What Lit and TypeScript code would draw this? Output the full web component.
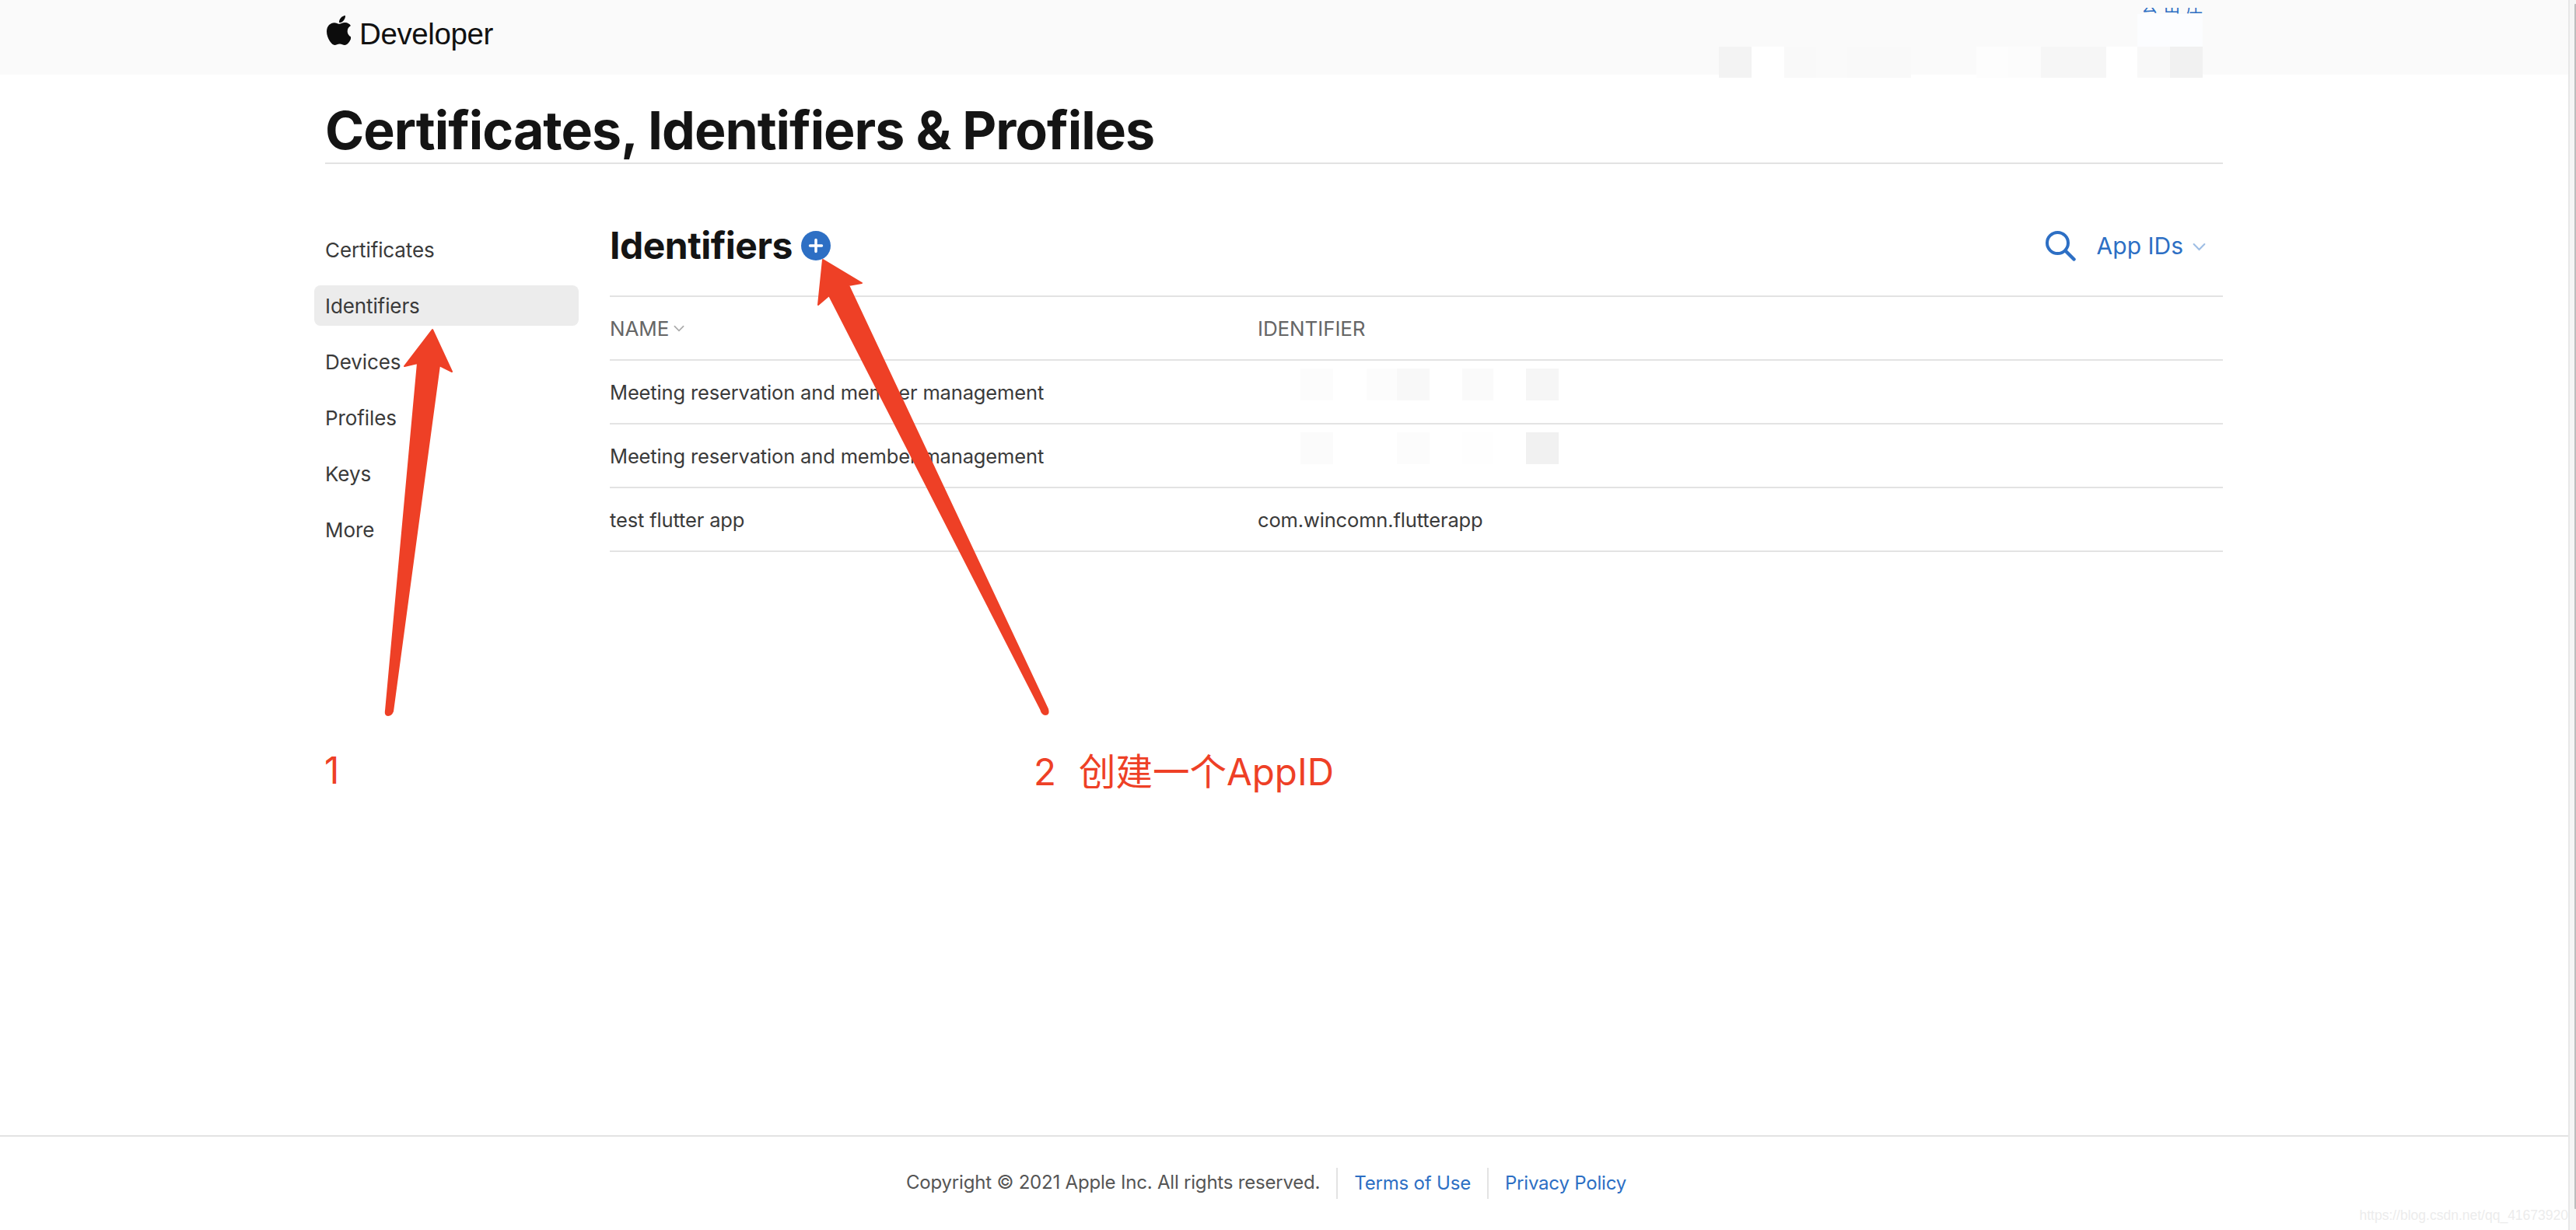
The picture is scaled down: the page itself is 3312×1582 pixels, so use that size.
import { LitElement, css, html, svg } from "lit";
import { customElement } from "lit/decorators.js";

const navItems = ["Certificates", "Identifiers", "Devices", "Profiles", "Keys", "More"];

// [gap before, width, colour] of the blurred-out patches
type Patch = [number, number, string];

const rows: { name: string; id?: string; patches?: Patch[] }[] = [
  {
    name: "Meeting reservation and member management",
    patches: [
      [55, 42, "#fcfcfc"],
      [43, 39, "#fcfcfc"],
      [0, 42, "#f8f8f8"],
      [42, 40, "#fafafa"],
      [42, 42, "#f6f6f6"],
    ],
  },
  {
    name: "Meeting reservation and member management",
    patches: [
      [55, 42, "#fbfbfb"],
      [82, 42, "#fcfcfc"],
      [42, 40, "#fefefe"],
      [42, 42, "#f1f1f1"],
    ],
  },
  { name: "test flutter app", id: "com.wincomn.flutterapp" },
];

const headerPatches: Patch[] = [
  [0, 42, "#f3f3f3"],
  [0, 42, "#ffffff"],
  [0, 41, "#f9f9f9"],
  [0, 40, "#fafafa"],
  [0, 82, "#f9f9f9"],
  [84, 41, "#fdfdfd"],
  [0, 42, "#fcfcfc"],
  [0, 84, "#f6f6f6"],
  [0, 40, "#ffffff"],
  [0, 42, "#f8f8f8"],
  [0, 42, "#f1f1f1"],
];

const chevron = svg`<path d="M1 1.5 6 6.500l5-5" fill="none" stroke="currentColor" stroke-width="1.500" stroke-linecap="round" />`;

@customElement("app-root")
export class AppRoot extends LitElement {
  static styles = css`
    :host {
      display: block;
      position: relative;
      width: 3312px;
      height: 1582px;
      overflow: hidden;
      background: #fff;
      color: #111;
      font-family: Inter, "Liberation Sans", sans-serif;
    }

    .page {
      display: flex;
      flex-direction: column;
      height: 100%;
      margin-right: 10px;
    }

    header {
      flex: none;
      height: 96px;
      background: #fafafa;
      padding-left: 420px;
      display: flex;
      align-items: center;
      position: relative;
    }

    .logo {
      width: 31px;
      height: 38px;
      margin: -18px 11px 0 0;
      fill: #0c0c0c;
    }

    .wordmark {
      font-family: "Liberation Sans", sans-serif;
      font-size: 38.5px;
      letter-spacing: -0.4px;
      color: #111;
      margin-top: -8px;
    }

    .account {
      position: absolute;
      left: 2753px;
      top: 10px;
      height: 8px;
      overflow: hidden;
      font-family: "Noto Sans CJK SC", sans-serif;
      font-size: 21px;
      line-height: 26px;
      letter-spacing: 8px;
      color: #2d6fc4;
      white-space: nowrap;
    }

    .account span {
      display: block;
      margin-top: -17px;
    }

    .smear {
      position: absolute;
      left: 2210px;
      top: 60px;
      height: 40px;
      display: flex;
    }

    .wash {
      position: absolute;
      left: 2748px;
      top: 18px;
      width: 84px;
      height: 42px;
      background: #fcfdff;
    }

    main {
      flex: 1;
      width: 2440px;
      margin-left: 418px;
      display: flex;
      flex-direction: column;
    }

    h1 {
      margin: 0;
      height: 92px;
      padding-top: 21px;
      border-bottom: 2px solid #e2e2e2;
      font-size: 68px;
      font-weight: 700;
      line-height: 100px;
      letter-spacing: -1px;
      white-space: nowrap;
      color: #141414;
    }

    .columns {
      display: flex;
      flex: 1;
    }

    nav {
      width: 380px;
      flex: none;
      margin-left: -14px;
      padding-top: 84px;
      display: flex;
      flex-direction: column;
      gap: 20px;
    }

    nav a {
      width: 340px;
      height: 52px;
      padding-left: 14px;
      box-sizing: border-box;
      display: flex;
      align-items: center;
      border-radius: 8px;
      font-size: 26px;
      letter-spacing: -0.1px;
      color: #3a3a3a;
    }

    nav a.active {
      background: #ececec;
    }

    .content {
      flex: 1;
      min-width: 0;
    }

    .bar {
      height: 129px;
      padding-top: 40px;
      display: flex;
      align-items: center;
      justify-content: space-between;
      border-bottom: 2px solid #e3e3e3;
    }

    .bar-title {
      display: flex;
      align-items: center;
      gap: 11px;
    }

    h2 {
      margin: 0;
      font-size: 48px;
      font-weight: 700;
      letter-spacing: -0.5px;
      color: #141414;
    }

    .plus {
      width: 38px;
      height: 38px;
      display: block;
    }

    .tools {
      display: flex;
      align-items: center;
      color: #2d6fc4;
      font-size: 30px;
      margin-right: 22px;
    }

    .search {
      width: 39px;
      height: 39px;
      margin: 2px 27px 0 0;
    }

    .tools .chev {
      width: 17px;
      height: 11px;
      margin: 3px 0 0 12px;
      color: #9dbde4;
    }

    .row {
      height: 80px;
      display: grid;
      grid-template-columns: 833px 1fr;
      align-items: center;
      border-bottom: 2px solid #e3e3e3;
      font-size: 25.5px;
      letter-spacing: -0.15px;
      color: #3a3a3a;
    }

    .row.head {
      color: #666;
      font-size: 26px;
      letter-spacing: -0.1px;
    }

    .row.head .cell {
      display: flex;
      align-items: center;
    }

    .row.head .chev {
      width: 14px;
      height: 9px;
      margin-left: 6px;
      color: #aaa;
    }

    .patches {
      display: flex;
      height: 41px;
      margin-top: -19px;
    }

    .patch {
      height: 100%;
      flex: none;
    }

    footer {
      flex: none;
      height: 122px;
      border-top: 2px solid #e3e3e3;
      box-sizing: border-box;
      display: flex;
      align-items: center;
      justify-content: center;
      font-size: 24px;
      letter-spacing: -0.2px;
      color: #555;
      padding-right: 46px;
    }

    footer span {
      margin-top: -3px;
    }

    footer a {
      color: #2d6fc4;
      padding-left: 21px;
      margin-left: 21px;
      border-left: 2px solid #e3e3e3;
      line-height: 40px;
    }

    .scrollbar {
      position: absolute;
      top: 0;
      right: 0;
      bottom: 0;
      width: 10px;
      background: #f5f5f5;
      border-left: 2px solid #e8e8e8;
      box-sizing: border-box;
    }

    .thumb {
      position: absolute;
      top: 5px;
      right: 0;
      width: 2px;
      height: 1550px;
      border-radius: 1px 0 0 1px;
      background: #bdbdbd;
    }

    .marks {
      position: absolute;
      left: 0;
      top: 0;
      width: 3312px;
      height: 1582px;
      pointer-events: none;
    }

    .note {
      position: absolute;
      color: #ee4026;
      font-size: 47.5px;
      line-height: 56px;
      white-space: nowrap;
      font-family: Inter, "Noto Sans CJK SC", sans-serif;
    }

    .note.one {
      left: 417px;
      top: 963px;
    }

    .note.two {
      left: 1329px;
      top: 965px;
    }

    .note .num {
      margin-right: 29px;
    }

    .watermark {
      position: absolute;
      right: 10px;
      top: 1552px;
      font-family: "Liberation Sans", sans-serif;
      font-size: 17.500px;
      line-height: 22px;
      color: #ececec;
      white-space: nowrap;
    }
  `;

  renderPatches(patches: Patch[]) {
    return patches.map(
      ([gap, width, color]) =>
        html`<div class="patch" style="margin-left:${gap}px;width:${width}px;background:${color}"></div>`
    );
  }

  render() {
    return html`
      <div class="page">
        <header>
          <svg class="logo" viewBox="4 32 365 448">
            <path d="M318.7 268.7c-.2-36.7 16.4-64.4 50-84.8-18.8-26.9-47.2-41.7-84.7-44.6-35.5-2.8-74.3 20.7-88.5 20.7-15 0-49.4-19.7-76.4-19.7C63.3 141.2 4 184.8 4 273.5q0 39.3 14.4 81.2c12.8 36.7 59 126.7 107.2 125.2 25.2-.6 43-17.9 75.8-17.900 31.8 0 48.3 17.900 76.400 17.900 48.600-.7 90.400-82.500 102.600-119.300-65.200-30.700-61.700-90-61.700-91.900zm-56.600-164.200c27.300-32.400 24.800-61.900 24-72.500-24.100 1.400-52 16.400-67.900 34.900-17.500 19.800-27.800 44.300-25.600 71.900 26.100 2 49.900-11.400 69.500-34.300z" />
          </svg>
          <span class="wordmark">Developer</span>
          <div class="account"><span>公出庄</span></div>
          <div class="wash"></div>
          <div class="smear">${this.renderPatches(headerPatches)}</div>
        </header>
        <main>
          <h1>Certificates, Identifiers &amp; Profiles</h1>
          <div class="columns">
            <nav>
              ${navItems.map((item) => html`<a class=${item === "Identifiers" ? "active" : ""}>${item}</a>`)}
            </nav>
            <div class="content">
              <div class="bar">
                <div class="bar-title">
                  <h2>Identifiers</h2>
                  <svg class="plus" viewBox="0 0 38 38">
                    <circle cx="19" cy="19" r="19" fill="#2d6fc4" />
                    <path d="M19 11.500v15M11.500 19h15" stroke="#fff" stroke-width="3.500" stroke-linecap="round" />
                  </svg>
                </div>
                <div class="tools">
                  <svg class="search" viewBox="0 0 39 39">
                    <circle cx="15.500" cy="15.500" r="13.500" fill="none" stroke="currentColor" stroke-width="4" />
                    <path d="M25.500 25.500 36.500 36.500" stroke="currentColor" stroke-width="4.500" stroke-linecap="round" />
                  </svg>
                  <span>App IDs</span>
                  <svg class="chev" viewBox="0 0 12 8">${chevron}</svg>
                </div>
              </div>
              <div class="row head">
                <div class="cell">NAME<svg class="chev" viewBox="0 0 12 8">${chevron}</svg></div>
                <div class="cell">IDENTIFIER</div>
              </div>
              ${rows.map(
                (row) => html`
                  <div class="row">
                    <div>${row.name}</div>
                    ${row.patches
                      ? html`<div class="patches">${this.renderPatches(row.patches)}</div>`
                      : html`<div>${row.id}</div>`}
                  </div>
                `
              )}
            </div>
          </div>
        </main>
        <footer>
          <span>Copyright © 2021 Apple Inc. All rights reserved.</span>
          <a>Terms of Use</a>
          <a>Privacy Policy</a>
        </footer>
      </div>
      <div class="scrollbar"><div class="thumb"></div></div>
      <svg class="marks" viewBox="0 0 3312 1582">
        <path fill="#ee4026" stroke="#ee4026" stroke-width="2" stroke-linejoin="round"
          d="M556 424 581 478 565 470 505 915Q503 920 499 920 495 920 496 914L537 467 520 471Z" />
        <path fill="#ee4026" stroke="#ee4026" stroke-width="2" stroke-linejoin="round"
          d="M1058 334 1108 364 1091 367 1347 912Q1349 919 1344 919 1340 919 1338 912L1066 380 1052 392Z" />
      </svg>
      <div class="note one">1</div>
      <div class="note two"><span class="num">2</span>创建一个AppID</div>
      <div class="watermark">https://blog.csdn.net/qq_41673920</div>
    `;
  }
}
